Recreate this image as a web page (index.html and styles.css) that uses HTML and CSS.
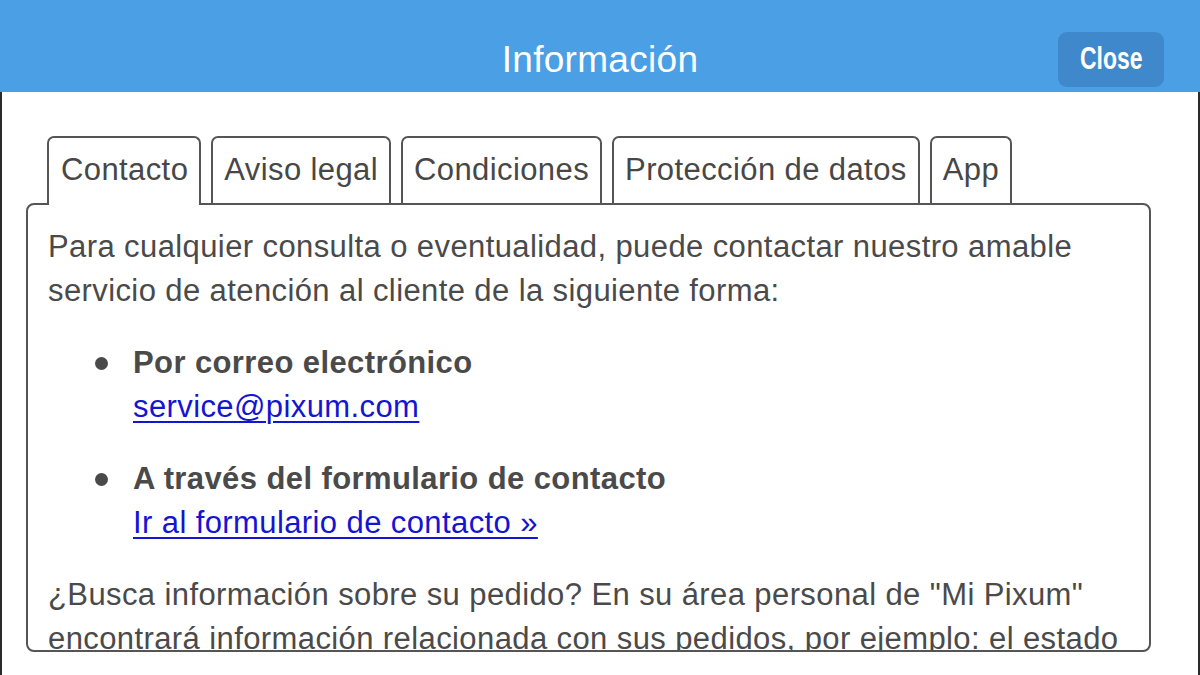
FILE: index.html
```html
<!DOCTYPE html>
<html lang="es">
<head>
    <meta charset="UTF-8">
    <meta name="viewport" content="width=device-width, initial-scale=1.0">
    <title>Información</title>
    <link rel="stylesheet" href="styles.css">
</head>
<body>
    <header class="topbar">
        <div></div>
        <h1 class="topbar-title">Información</h1>
        <button class="close-btn"><span>Close</span></button>
    </header>

    <main class="sheet">
        <nav class="tabs">
            <div class="tab active">Contacto</div>
            <div class="tab">Aviso legal</div>
            <div class="tab">Condiciones</div>
            <div class="tab">Protección de datos</div>
            <div class="tab">App</div>
        </nav>

        <section class="panel">
            <p>Para cualquier consulta o eventualidad, puede contactar nuestro amable servicio de atención al cliente de la siguiente forma:</p>
            <ul class="contact-list">
                <li>
                    <div>
                        <strong>Por correo electrónico</strong><br>
                        <a href="#">service@pixum.com</a>
                    </div>
                </li>
                <li>
                    <div>
                        <strong>A través del formulario de contacto</strong><br>
                        <a href="#">Ir al formulario de contacto »</a>
                    </div>
                </li>
            </ul>
            <p>¿Busca información sobre su pedido? En su área personal de "Mi Pixum" encontrará información relacionada con sus pedidos, por ejemplo: el estado de su pedido, el número de seguimiento del envío y sus facturas.</p>
        </section>
    </main>
</body>
</html>
```

FILE: styles.css
```css
html, body {
    margin: 0;
    height: 100%;
    background-color: #fff;
    font-family: "Liberation Sans", Arial, sans-serif;
    overflow: hidden;
}
.topbar {
    display: grid;
    grid-template-columns: 1fr auto 1fr;
    align-items: center;
    height: 66px;
    padding-top: 26px;
    background-color: #4b9fe5;
}
.topbar-title {
    margin: 0;
    font-size: 37px;
    font-weight: normal;
    line-height: 1;
    letter-spacing: 0.3px;
    color: #fff;
}
.close-btn {
    justify-self: end;
    margin-right: 36px;
    width: 106px;
    height: 55px;
    border: none;
    border-radius: 9px;
    background-color: #3f88cc;
    color: #fff;
    font-family: "Liberation Sans", Arial, sans-serif;
    font-weight: bold;
    font-size: 31px;
    cursor: pointer;
}
.close-btn span {
    display: inline-block;
    transform: scaleX(0.74);
}
.sheet {
    height: 583px;
    box-sizing: border-box;
    padding: 44px 47px 0 24px;
    border-left: 2px solid #2b2b2b;
    border-right: 2px solid #2b2b2b;
}
.tabs {
    display: flex;
    align-items: flex-start;
    gap: 10px;
    margin-left: 21px;
    height: 67px;
}
.tab {
    box-sizing: border-box;
    height: 67px;
    padding: 10px 11px 0;
    border: 2px solid #555;
    border-bottom: none;
    border-radius: 7px 7px 0 0;
    font-size: 31px;
    line-height: 44px;
    letter-spacing: 0.4px;
    color: #474747;
    background-color: #fff;
}
.tab.active {
    height: 69px;
    padding: 10px 11px 0 12px;
    position: relative;
    z-index: 1;
}
.panel {
    box-sizing: border-box;
    height: 449px;
    padding: 20px 20px 0;
    border: 2px solid #555;
    border-radius: 8px;
    overflow: hidden;
    font-size: 31px;
    line-height: 44px;
    letter-spacing: 0.4px;
    color: #4a4a4a;
}
.panel p {
    margin: 0 0 28px;
}
.contact-list {
    list-style: none;
    margin: 0 0 28px;
    padding-left: 85px;
}
.contact-list li {
    display: flex;
}
.contact-list li + li {
    margin-top: 28px;
}
.contact-list li::before {
    content: "";
    flex: none;
    width: 13px;
    height: 13px;
    margin: 16px 25px 0 -38px;
    border-radius: 50%;
    background-color: #4a4a4a;
}
.contact-list a {
    color: #1414d4;
    text-decoration: underline;
    text-decoration-thickness: 2px;
    text-underline-offset: 4px;
}
```
